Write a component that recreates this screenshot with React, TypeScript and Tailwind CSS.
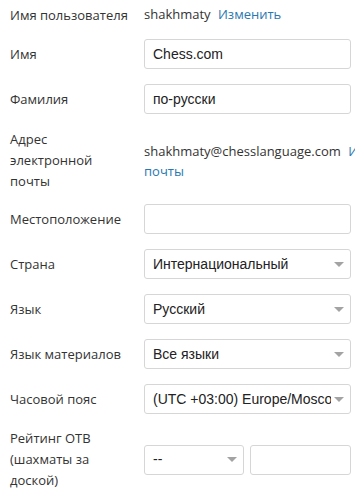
import React from 'react';

const labelCls = "w-[134px] shrink-0 text-[13px] leading-[21px] text-[#333]";
const boxCls =
  "h-[30px] border border-[#d6d6d6] rounded-[3px] bg-white flex items-center pl-2 text-[14px] text-[#222] font-['Liberation_Sans',Arial,sans-serif]";

function Caret() {
  return (
    <svg width="10" height="5" viewBox="0 0 10 5" className="shrink-0">
      <path d="M0 0h10L5 5z" fill="#a3a3a3" />
    </svg>
  );
}

function TextBox({ value, className = "w-[207px]" }: { value?: string; className?: string }) {
  return <div className={`${boxCls} ${className}`}>{value}</div>;
}

function SelectBox({ value, className = "w-[207px]" }: { value: string; className?: string }) {
  return (
    <div className={`${boxCls} ${className} pr-[6px]`}>
      <span className="flex-1 overflow-hidden whitespace-nowrap">{value}</span>
      <span className="ml-[3px]">
        <Caret />
      </span>
    </div>
  );
}

function Row({ label, children, className = "" }: { label: React.ReactNode; children: React.ReactNode; className?: string }) {
  return (
    <div className={`flex items-center ${className}`}>
      <div className={labelCls}>{label}</div>
      {children}
    </div>
  );
}

export default function App() {
  return (
    <div className="w-[355px] h-[502px] overflow-hidden bg-white font-['Open_Sans',sans-serif]">
      <div className="pl-[10px] w-[600px]">
        <Row label="Имя пользователя" className="h-[30px]">
          <div className="text-[13px] text-[#333]">
            shakhmaty <a className="ml-[4px] text-[#2b78b0]">Изменить</a>
          </div>
        </Row>

        <Row label="Имя" className="mt-[9px]">
          <TextBox value="Chess.com" />
        </Row>

        <Row label="Фамилия" className="mt-[15px]">
          <TextBox value="по-русски" />
        </Row>

        {/* email overflows the viewport, as on the real page */}
        <Row label={<>Адрес<br />электронной<br />почты</>} className="mt-[15px]">
          <div className="w-[415px] text-[13px] leading-[20px] text-[#333]">
            shakhmaty@chesslanguage.com{' '}
            <a className="ml-[4px] text-[#2b78b0]">Изменить адрес электронной почты</a>
          </div>
        </Row>

        <Row label="Местоположение" className="mt-[12px]">
          <TextBox />
        </Row>

        <Row label="Страна" className="mt-[15px]">
          <SelectBox value="Интернациональный" />
        </Row>

        <Row label="Язык" className="mt-[15px]">
          <SelectBox value="Русский" />
        </Row>

        <Row label="Язык материалов" className="mt-[15px]">
          <SelectBox value="Все языки" />
        </Row>

        <Row label="Часовой пояс" className="mt-[15px]">
          <SelectBox value="(UTC +03:00) Europe/Moscow" />
        </Row>

        <Row label={<>Рейтинг OTB<br />(шахматы за<br />доской)</>} className="mt-[14px]">
          <div className="flex gap-[6px]">
            <SelectBox value="--" className="w-[100px]" />
            <TextBox className="w-[101px]" />
          </div>
        </Row>
      </div>
    </div>
  );
}
